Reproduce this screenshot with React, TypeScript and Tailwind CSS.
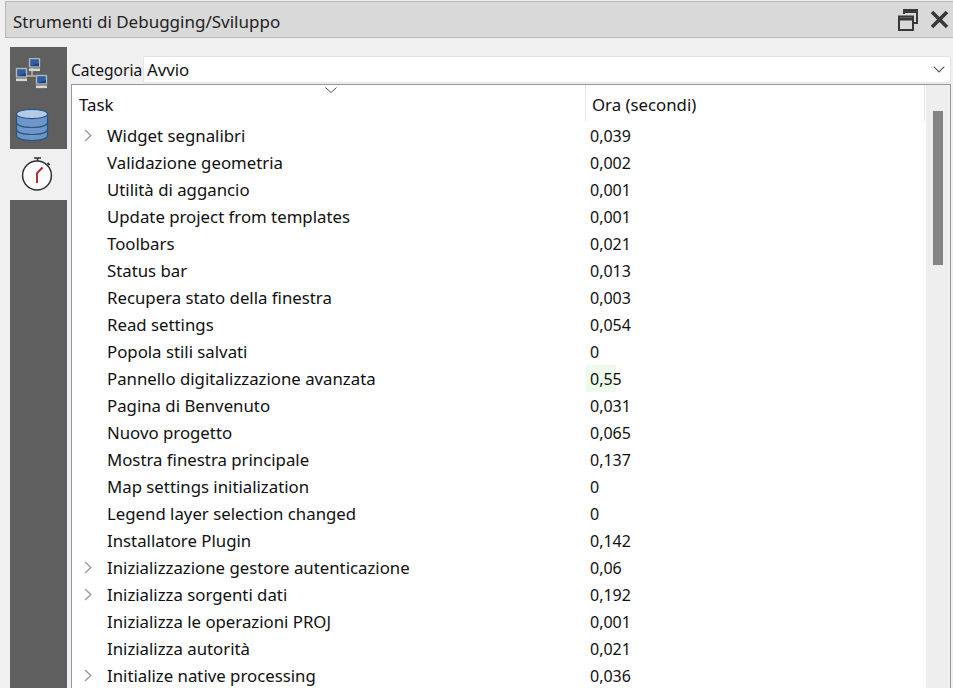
import React from "react";

const rows: [string, string, boolean?][] = [
  ["Widget segnalibri", "0,039", true],
  ["Validazione geometria", "0,002"],
  ["Utilità di aggancio", "0,001"],
  ["Update project from templates", "0,001"],
  ["Toolbars", "0,021"],
  ["Status bar", "0,013"],
  ["Recupera stato della finestra", "0,003"],
  ["Read settings", "0,054"],
  ["Popola stili salvati", "0"],
  ["Pannello digitalizzazione avanzata", "0,55"],
  ["Pagina di Benvenuto", "0,031"],
  ["Nuovo progetto", "0,065"],
  ["Mostra finestra principale", "0,137"],
  ["Map settings initialization", "0"],
  ["Legend layer selection changed", "0"],
  ["Installatore Plugin", "0,142"],
  ["Inizializzazione gestore autenticazione", "0,06", true],
  ["Inizializza sorgenti dati", "0,192", true],
  ["Inizializza le operazioni PROJ", "0,001"],
  ["Inizializza autorità", "0,021"],
  ["Initialize native processing", "0,036", true],
];

function Monitor({ x, y }: { x: number; y: number }) {
  return (
    <g transform={`translate(${x} ${y})`}>
      <rect x="0" y="0" width="11" height="9.5" fill="#c4c8cc" stroke="#8a8f94" strokeWidth="0.6" />
      <rect x="1.2" y="1.2" width="8.6" height="7" fill="#2f5f9f" />
      <path d="M1.2 8.2 L9.8 5 L9.8 8.2 Z" fill="#1d4278" />
      <rect x="0" y="10.5" width="11" height="2.6" fill="#d8d8d4" />
    </g>
  );
}

function NetworkIcon() {
  return (
    <svg width="34" height="32" viewBox="0 0 34 32">
      <path d="M6 14 L6 18 L28 18 M17 10 L17 18 L22 18" fill="none" stroke="#b8b8b4" strokeWidth="1.5" />
      <Monitor x={14} y={0} />
      <Monitor x={1} y={10} />
      <Monitor x={21} y={17} />
    </svg>
  );
}

function DatabaseIcon() {
  return (
    <svg width="34" height="34" viewBox="0 0 34 34">
      <path d="M1.5 6 V27 C1.5 30.5 8 32.5 17 32.5 C26 32.5 32.5 30.5 32.5 27 V6 Z" fill="#6d97c8" stroke="#2f5680" strokeWidth="1.2" />
      <path d="M1.5 14 C1.5 17.5 8 19.5 17 19.5 C26 19.5 32.5 17.5 32.5 14 M1.5 21 C1.5 24.5 8 26.5 17 26.5 C26 26.5 32.5 24.5 32.5 21" fill="none" stroke="#2f5680" strokeWidth="1.2" />
      <ellipse cx="17" cy="6" rx="15.5" ry="4.6" fill="#b3cbe6" stroke="#2f5680" strokeWidth="1.2" />
    </svg>
  );
}

function TimerIcon() {
  return (
    <svg width="32" height="35" viewBox="0 0 32 35">
      <path d="M13 1 H20 M16.5 1 V4" stroke="#333" strokeWidth="1.6" fill="none" />
      <path d="M26.5 6 L28.5 8" stroke="#333" strokeWidth="2" />
      <circle cx="16" cy="18.5" r="14.4" fill="#fff" stroke="#333" strokeWidth="1.5" />
      <path d="M16 26 V16 L21.5 10.5" fill="none" stroke="#b01c22" strokeWidth="1.8" />
    </svg>
  );
}

function Chevron() {
  return (
    <svg width="8" height="13" viewBox="0 0 8 13">
      <path d="M1 1 L6.8 6.5 L1 12" fill="none" stroke="#9a9a9a" strokeWidth="1.4" />
    </svg>
  );
}

export default function App() {
  return (
    <div
      className="h-[688px] w-[953px] overflow-hidden bg-[#f0f0f0] pl-[5px] pt-px text-[16.8px] text-[#101010]"
      style={{ fontFamily: '"Noto Sans", "Open Sans", sans-serif' }}
    >
      <div className="flex h-[37px] items-center justify-between border border-r-0 border-[#b9b9b9] bg-[#d9d9d9] pl-[7px] pr-[4px]">
        <span className="pt-[5px] text-[17px] text-[#222]">Strumenti di Debugging/Sviluppo</span>
        <div className="flex items-center gap-[12px]">
          <svg width="20" height="23" viewBox="0 0 20 23">
            <path d="M6 6 V2 H19 V15 H15" fill="none" stroke="#383838" strokeWidth="2" />
            <path d="M6 3.5 H19" stroke="#383838" strokeWidth="3" />
            <rect x="1" y="8.5" width="14" height="13.5" fill="none" stroke="#383838" strokeWidth="2" />
            <path d="M1 11 H15" stroke="#383838" strokeWidth="3" />
          </svg>
          <svg width="19" height="19" viewBox="0 0 19 19">
            <path d="M2 2 L17 17 M17 2 L2 17" stroke="#383838" strokeWidth="3.6" />
          </svg>
        </div>
      </div>

      <div className="flex pl-[5px] pt-[9px]">
        <div className="flex w-[57px] flex-col">
          <div className="flex h-[102px] flex-col items-start gap-[18px] bg-[#5f5f5f] pl-[5px] pt-[11px]">
            <NetworkIcon />
            <DatabaseIcon />
          </div>
          <div className="flex h-[51px] items-start pl-[11px] pt-[8px]">
            <TimerIcon />
          </div>
          <div className="h-[500px] bg-[#5f5f5f]" />
        </div>

        <div className="ml-[4px] flex w-[880px] flex-col">
          <div className="box-content flex h-[28px] pt-[9px]">
            <span className="w-[72px] pt-px text-[15.6px] leading-[27px]">Categoria</span>
            <div className="flex h-[27px] w-[808px] items-center justify-between rounded-[2px] border border-[#e4e4e4] bg-white pl-[3px] pr-[5px]">
              <span>Avvio</span>
              <svg width="12" height="7" viewBox="0 0 12 7">
                <path d="M0.7 0.7 L6 6 L11.3 0.7" fill="none" stroke="#555" strokeWidth="1.1" />
              </svg>
            </div>
          </div>

          <div className="flex h-[610px] border border-b-0 border-[#8f98a3] bg-white">
            <div className="w-[854px] shrink-0">
              <div className="relative flex h-[37px]">
                <svg width="12" height="6" viewBox="0 0 12 6" className="absolute left-[253px] top-[2px]">
                  <path d="M0.5 0.5 L6 5.5 L11.5 0.5" fill="none" stroke="#555" strokeWidth="1" />
                </svg>
                <div className="flex h-[36px] w-[514px] items-center border-r border-[#e5e5e5] pl-[7px] pt-[4px]">Task</div>
                <div className="flex h-[36px] w-[339px] items-center border-r border-[#e5e5e5] pl-[6px] pt-[4px]">Ora (secondi)</div>
              </div>
              {rows.map(([task, time, expand]) => (
                <div key={task} className="flex h-[27px] items-center">
                  <div className="flex w-[514px] items-center">
                    <div className="flex w-[35px] justify-start pl-[12px]">{expand && <Chevron />}</div>
                    <span className="whitespace-nowrap">{task}</span>
                  </div>
                  <div className={`h-full w-[30px] pl-[4px] pt-px text-[16px] leading-[27px] ${time === "0,55" ? "bg-[#eefbea]" : ""}`}>
                    {time}
                  </div>
                </div>
              ))}
            </div>
            <div className="flex-1 bg-[#eeeeee] pl-[7px] pt-[26px]">
              <div className="h-[154px] w-[10px] bg-[#858585]" />
            </div>
          </div>
        </div>
      </div>
    </div>
  );
}
